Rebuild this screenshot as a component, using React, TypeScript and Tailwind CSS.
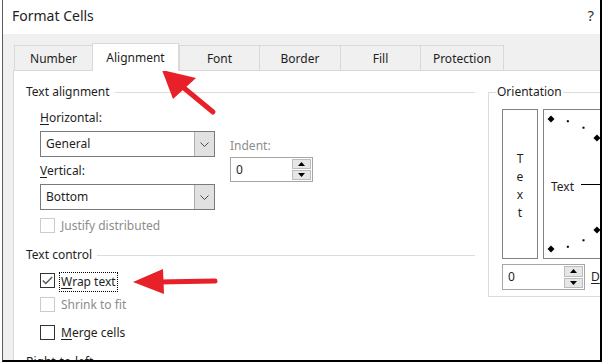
import React from 'react';

const tabs = [
  { label: 'Number', w: 'w-[78px]' },
  { label: 'Alignment', w: 'w-[87px]', active: true },
  { label: 'Font', w: 'w-[80px]' },
  { label: 'Border', w: 'w-[81px]' },
  { label: 'Fill', w: 'w-[80px]' },
  { label: 'Protection', w: 'w-[84px]', last: true },
];

function Chevron() {
  return (
    <svg width="9" height="5" viewBox="0 0 9 5" className="text-[#4a4a4a]">
      <path d="M0.5 0.5 L4.5 4.5 L8.5 0.5" fill="none" stroke="currentColor" strokeWidth="1" />
    </svg>
  );
}

function Combo({ value }: { value: string }) {
  return (
    <div className="flex h-[26px] w-[175px] border border-[#7a7a7a] bg-white">
      <span className="flex flex-1 items-center pl-[5px]">{value}</span>
      <span className="flex w-[20px] items-center justify-center border-l border-[#adadad] bg-[#e1e1e1]">
        <Chevron />
      </span>
    </div>
  );
}

function Spinner({ w }: { w: string }) {
  return (
    <div className={`flex h-[25px] ${w} border border-[#a6a6a6] bg-white`}>
      <span className="flex flex-1 items-center pl-[5px]">0</span>
      <div className="flex w-[21px] flex-col gap-px p-px">
        <span className="flex flex-1 items-center justify-center border border-[#bcbcbc] bg-[#e6e6e6]">
          <svg width="7" height="4" viewBox="0 0 7 4"><path d="M3.5 0 L7 4 L0 4 Z" fill="#000" /></svg>
        </span>
        <span className="flex flex-1 items-center justify-center border border-[#bcbcbc] bg-[#e6e6e6]">
          <svg width="7" height="4" viewBox="0 0 7 4"><path d="M0 0 L7 0 L3.5 4 Z" fill="#000" /></svg>
        </span>
      </div>
    </div>
  );
}

function Checkbox({ checked, disabled }: { checked?: boolean; disabled?: boolean }) {
  return (
    <span className={`flex h-[15px] w-[15px] shrink-0 items-center justify-center border bg-white ${disabled ? 'border-[#cccccc]' : 'border-[#333333]'}`}>
      {checked && (
        <svg width="11" height="9" viewBox="0 0 11 9">
          <path d="M0.8 4.6 L3.8 7.6 L10.2 1" fill="none" stroke="#555" strokeWidth="1.4" />
        </svg>
      )}
    </span>
  );
}

function GroupHeader({ label, gap }: { label: string; gap: string }) {
  return (
    <div className="flex h-[16px] items-center">
      <span className="leading-[16px]">{label}</span>
      <span className={`${gap} h-px flex-1 bg-[#dcdcdc]`} />
    </div>
  );
}

function Dial() {
  const cx = 7;
  const cy = 74;
  const r = 65;
  const marks = [];
  for (let a = 90; a >= -90; a -= 15) {
    const rad = (a * Math.PI) / 180;
    const x = cx + r * Math.cos(rad);
    const y = cy - r * Math.sin(rad);
    if (a % 45 === 0) {
      marks.push(<polygon key={a} points={`${x},${y - 3.5} ${x + 3.5},${y} ${x},${y + 3.5} ${x - 3.5},${y}`} fill="#000" />);
    } else {
      marks.push(<rect key={a} x={x - 1} y={y - 1} width="2" height="2" fill="#000" />);
    }
  }
  return (
    <div className="relative h-[150px] w-[140px] border border-[#828282] bg-white">
      <svg className="absolute inset-0" width="138" height="148">
        {marks}
        <line x1="37" y1="74.5" x2={cx + r} y2="74.5" stroke="#000" strokeWidth="1" />
      </svg>
      <span className="absolute left-[7px] top-[69px] leading-[16px]">Text</span>
    </div>
  );
}

function TextAlignment() {
  return (
    <div className="flex flex-col">
      <GroupHeader label="Text alignment" gap="ml-[5px]" />
      <div className="mt-[10px] flex pl-[14px]">
        <div className="flex flex-col">
          <span className="leading-[16px]"><u className="underline-offset-2">H</u>orizontal:</span>
          <div className="mt-[5px]"><Combo value="General" /></div>
          <span className="mt-[6px] leading-[16px]"><u className="underline-offset-2">V</u>ertical:</span>
          <div className="mt-[5px]"><Combo value="Bottom" /></div>
          <div className="mt-[8px] flex items-center text-[#8d8d8d]">
            <Checkbox disabled />
            <span className="ml-[6px] leading-[15px]">Justify distributed</span>
          </div>
        </div>
        <div className="ml-[15px] flex flex-col">
          <span className="mt-[28px] leading-[16px] text-[#8d8d8d]">Indent:</span>
          <div className="mt-[3px]"><Spinner w="w-[83px]" /></div>
        </div>
      </div>
    </div>
  );
}

function TextControl() {
  return (
    <div className="mt-[14px] flex flex-col">
      <GroupHeader label="Text control" gap="ml-[5px]" />
      <div className="flex flex-col pl-[14px]">
        <div className="mt-[10px] flex h-[15px] items-start">
          <Checkbox checked />
          <span className="-mt-[1px] ml-[4px] flex h-[20px] items-center border border-dotted border-black px-[1px]">
            <u className="underline-offset-2">W</u>rap text
          </span>
        </div>
        <div className="mt-[9px] flex items-center text-[#8d8d8d]">
          <Checkbox disabled />
          <span className="ml-[6px] leading-[15px]">Shrink to fit</span>
        </div>
        <div className="mt-[13px] flex items-center">
          <Checkbox />
          <span className="ml-[6px] leading-[15px]"><u className="underline-offset-2">M</u>erge cells</span>
        </div>
      </div>
      <div className="mt-[14px]">
        <GroupHeader label="Right-to-left" gap="ml-[5px]" />
      </div>
    </div>
  );
}

function Orientation() {
  return (
    <fieldset className="ml-[13px] mt-[13px] h-fit w-[140px] shrink-0 border border-[#dcdcdc] pb-[6px] pt-[9px]">
      <legend className="ml-[7px] px-px leading-[16px]">Orientation</legend>
      <div className="flex flex-col pl-[13px]">
        <div className="flex gap-[5px]">
          <div className="flex h-[150px] w-[36px] shrink-0 flex-col items-center justify-center border border-[#828282] pt-[4px] leading-[18px]">
            <span>T</span>
            <span>e</span>
            <span>x</span>
            <span>t</span>
          </div>
          <div className="shrink-0"><Dial /></div>
        </div>
        <div className="mt-[5px] flex items-center">
          <div className="h-[26px]"><Spinner w="w-[83px] h-[26px]" /></div>
          <span className="ml-[6px]"><u className="underline-offset-2">D</u>egrees</span>
        </div>
      </div>
    </fieldset>
  );
}

export default function App() {
  return (
    <div className="relative h-[362px] w-[602px] overflow-hidden bg-white font-['Noto_Sans',sans-serif] text-[12px] text-[#1e1e1e]">
      <div className="ml-[2px] flex h-[362px] w-[600px] flex-col border-b-2 border-l border-r-2 border-b-black border-l-[#5c5c5c] border-r-black bg-[#f0f0f0]">
        <div className="flex h-[34px] shrink-0 items-center justify-between bg-white pb-[4px] pl-[9px] pr-[6px]">
          <span className="text-[14px]">Format Cells</span>
          <span className="text-[15px] text-[#333]">?</span>
        </div>
        <div className="flex h-[36px] shrink-0 items-end pl-[11px]">
          {tabs.map((t) => (
            <div
              key={t.label}
              className={`flex ${t.w} items-center justify-center border-l border-t border-[#d9d9d9] ${t.last ? 'border-r' : ''} ${
                t.active ? 'relative z-10 -mb-px h-[28px] border-r bg-white' : 'h-[25px] pt-[2px]'
              }`}
            >
              {t.label}
            </div>
          ))}
        </div>
        <div className="ml-[10px] flex min-h-0 flex-1 overflow-hidden border-l border-t border-[#d9d9d9] bg-white">
          <div className="flex w-[461px] shrink-0 flex-col pl-[12px] pt-[13px]">
            <TextAlignment />
            <TextControl />
          </div>
          <Orientation />
        </div>
      </div>
      <svg className="pointer-events-none absolute inset-0" width="602" height="362">
        <line x1="213" y1="112" x2="184" y2="88" stroke="#e8202a" strokeWidth="5" strokeLinecap="round" />
        <polygon points="162,70 173,99 196,78" fill="#e8202a" />
        <line x1="158" y1="282" x2="215" y2="281" stroke="#e8202a" strokeWidth="5" strokeLinecap="round" />
        <polygon points="133,282 163,269 164,294" fill="#e8202a" />
      </svg>
    </div>
  );
}
